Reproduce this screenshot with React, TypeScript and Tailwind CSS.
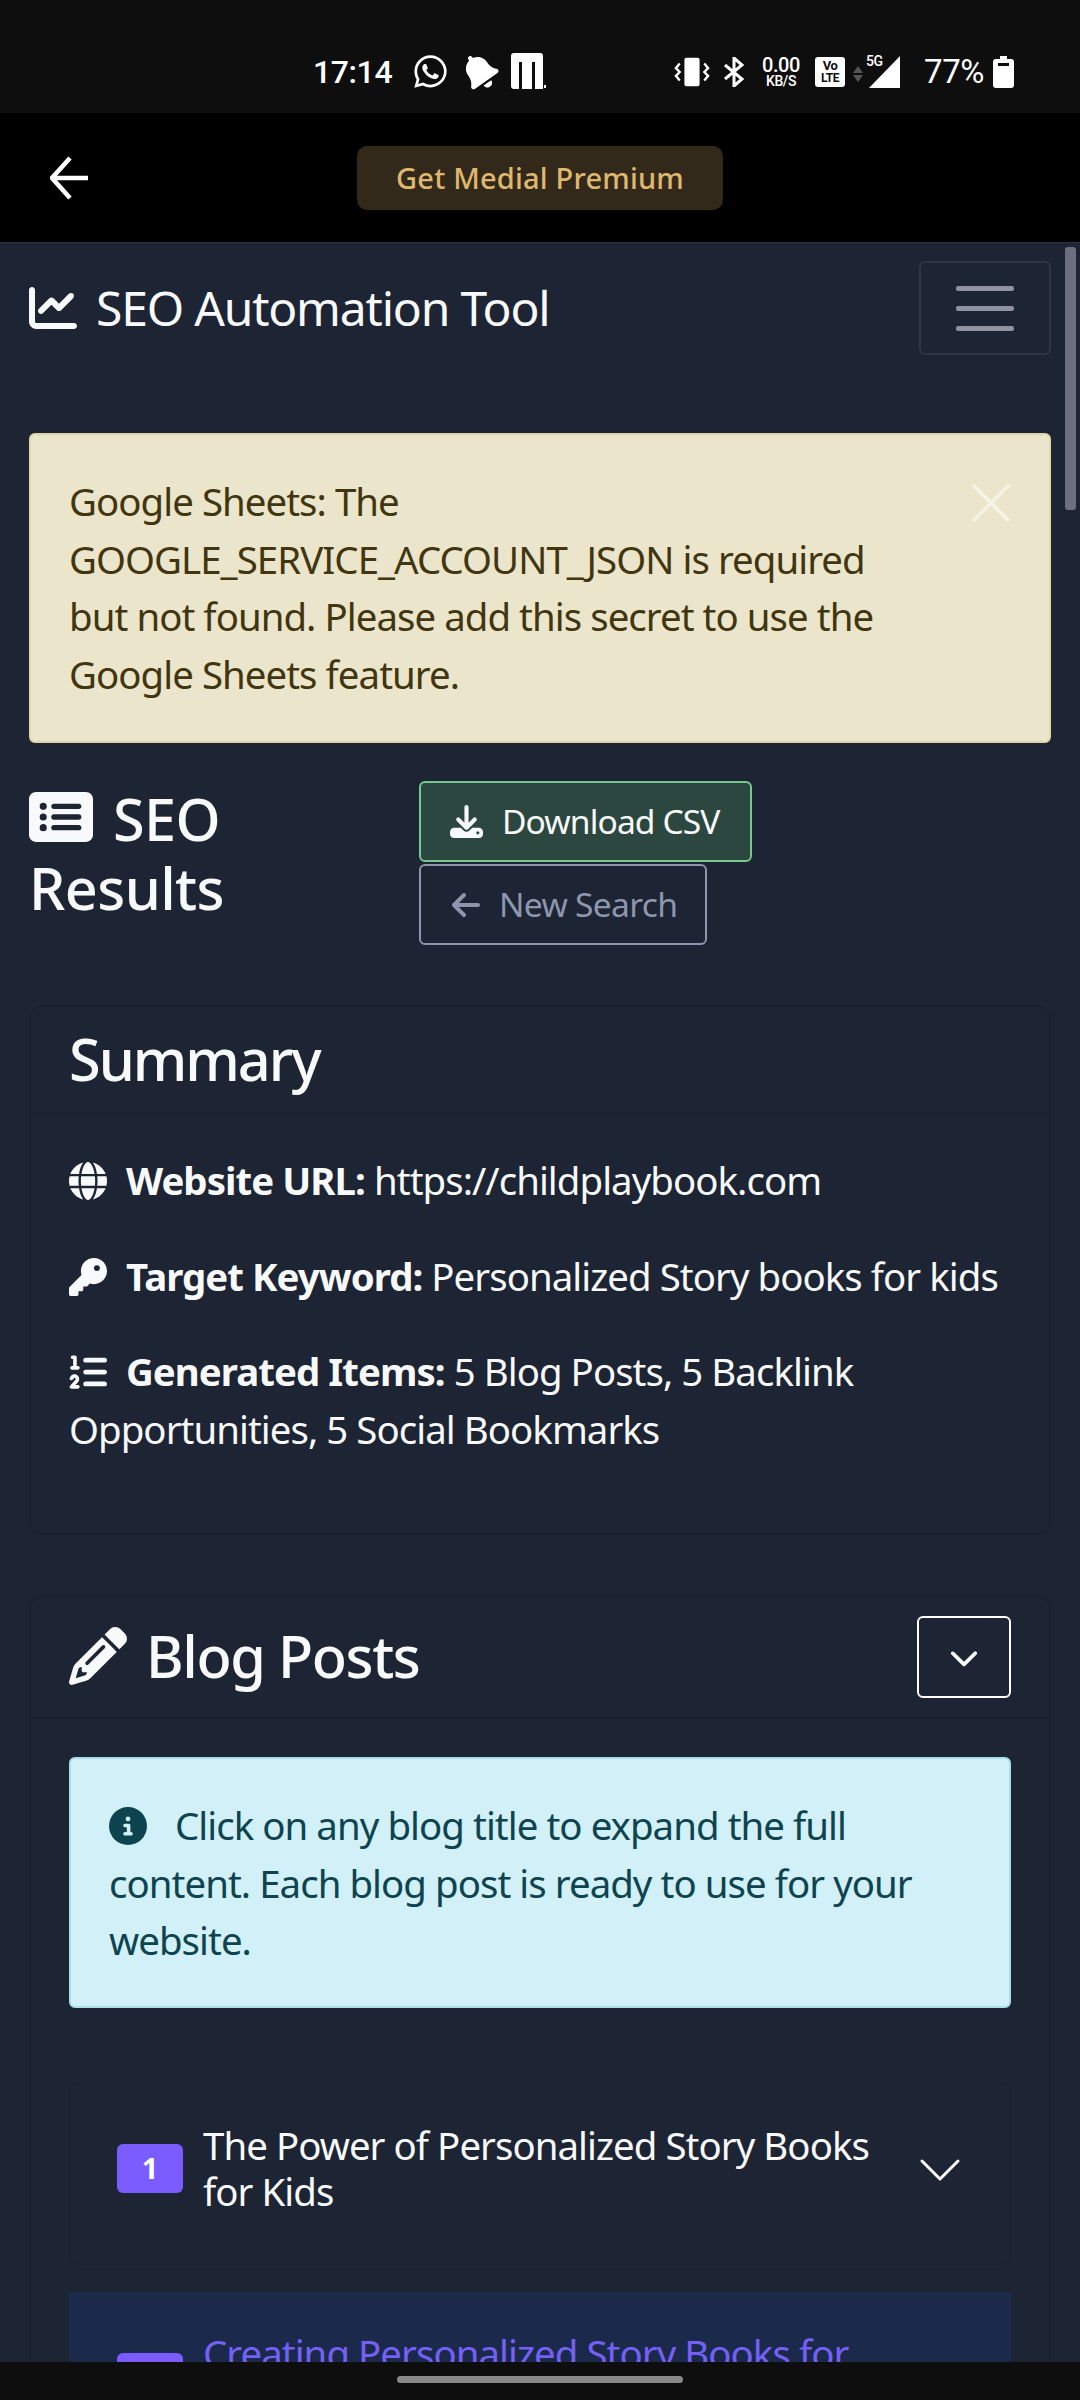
import {
	FaArrowLeft,
	FaBell,
	FaChartLine,
	FaChevronDown,
	FaCircleInfo,
	FaDownload,
	FaGlobe,
	FaKey,
	FaListOl,
	FaPencil,
	FaRectangleList,
	FaWhatsapp,
} from "react-icons/fa6";

const StatusBar = () => {
	return (
		<div className="h-[113px] shrink-0 bg-[#0e0e0e] pt-[53px] pl-[313px] flex items-start text-white tracking-[-0.4px] font-['Roboto',sans-serif]">
			<span className="text-[32px] leading-[38px] w-[80px] font-medium">17:14</span>
			<FaWhatsapp className="ml-[19px] size-[37px]" />
			<FaBell className="ml-[12px] size-[37px] -rotate-[35deg]" />
			<svg viewBox="0 0 36 36" className="ml-[12px] size-[36px]" fill="white">
				<path d="M4 0h26a3 3 0 0 1 3 3v33H25V9h-3v27H12V9H9v27H4a3 3 0 0 1-3-3V3a3 3 0 0 1 3-3z" />
				<rect x="34" y="32" width="2" height="3" />
			</svg>

			<svg viewBox="0 0 38 30" className="ml-[128px] mt-[4px] w-[36px] h-[30px]" fill="none" stroke="white" strokeWidth="2.5">
				<rect x="11" y="0" width="16" height="30" rx="2" fill="white" stroke="none" />
				<path d="M6 6 2 11l4 4-4 4 4 5M32 6l4 5-4 4 4 4-4 5" />
			</svg>
			<svg viewBox="0 0 20 30" className="ml-[14px] mt-[4px] w-[20px] h-[30px]" fill="none" stroke="white" strokeWidth="3">
				<path d="M1 8l17 14-8 7V1l8 7L1 22" />
			</svg>
			<div className="ml-[16px] mt-[2px] w-[42px] flex flex-col items-center font-medium">
				<span className="text-[20px] leading-[20px]">0.00</span>
				<span className="text-[14px] leading-[12px]">KB/S</span>
			</div>
			<div className="ml-[13px] mt-[4px] w-[30px] h-[30px] rounded-[3px] bg-white text-[#0e0e0e] flex flex-col items-center justify-center font-bold">
				<span className="text-[13px] leading-[13px]">Vo</span>
				<span className="text-[12px] leading-[13px]">LTE</span>
			</div>
			<div className="ml-[8px] mt-[13px] flex flex-col gap-[2px]">
				<div className="w-0 h-0 border-x-[5px] border-x-transparent border-b-[7px] border-b-[#555555]" />
				<div className="w-0 h-0 border-x-[5px] border-x-transparent border-t-[7px] border-t-[#555555]" />
			</div>
			<div className="relative ml-[5px] mt-[3px] w-[32px] h-[32px]">
				<svg viewBox="0 0 32 32" className="size-[32px]" fill="white">
					<path d="M32 0v32H1z" />
				</svg>
				<span className="absolute -left-[2px] -top-[2px] text-[14px] leading-[14px] font-medium">5G</span>
			</div>
			<span className="ml-[24px] text-[33px] leading-[38px] w-[59px]">77%</span>
			<svg viewBox="0 0 21 32" className="ml-[10px] mt-[3px] w-[21px] h-[32px]" fill="white">
				<path d="M7 0h7v3h4a3 3 0 0 1 3 3v23a3 3 0 0 1-3 3H3a3 3 0 0 1-3-3V6a3 3 0 0 1 3-3h4z" />
				<rect x="5" y="7" width="11" height="3" fill="#0e0e0e" />
			</svg>
		</div>
	);
};

const BrowserBar = () => {
	return (
		<div className="h-[130px] shrink-0 bg-black border-b border-[#2c3344] flex items-center relative">
			<svg viewBox="0 0 38 44" className="ml-[50px] w-[38px] h-[44px]" fill="none" stroke="white" strokeWidth="4.5">
				<path d="M20 2 2 22l18 20M2 22h36" />
			</svg>
			<div className="absolute left-[357px] top-[33px] w-[366px] h-[64px] rounded-[10px] bg-[#33291a] text-[#dfb76f] text-[29px] font-medium tracking-[0.2px] flex items-center justify-center">
				Get Medial Premium
			</div>
		</div>
	);
};

const BlogItem = ({ n, title }: { n: number; title: string }) => {
	return (
		<div className="border border-[#1a212f] rounded-[10px] pb-[10px]">
			<div className="h-[171px] pl-[47px] pr-[46px] flex items-center border-b border-[#1a212f]">
				<span className="w-[66px] h-[49px] rounded-[6px] bg-[#7a5cff] text-white text-[29px] font-bold flex items-center justify-center shrink-0">
					{n}
				</span>
				<span className="ml-[20px] flex-1 text-[38.4px] leading-[46px] tracking-[-0.95px] text-[#f8f9fa]">{title}</span>
				<svg viewBox="0 0 16 16" className="size-[48px] mt-[4px] ml-[19px] shrink-0" fill="white">
					<path d="M1.646 4.646a.5.5 0 0 1 .708 0L8 10.293l5.646-5.647a.5.5 0 0 1 .708.708l-6 6a.5.5 0 0 1-.708 0l-6-6a.5.5 0 0 1 0-.708z" />
				</svg>
			</div>
		</div>
	);
};

const App = () => {
	return (
		<div className="w-[1080px] h-[2400px] flex flex-col overflow-hidden bg-[#1d2433] text-[#f8f9fa] font-['Noto_Sans',sans-serif]">
			<StatusBar />
			<BrowserBar />

			<div className="relative flex-1 overflow-hidden px-[29px]">
				{/* scrollbar thumb */}
				<div className="absolute right-[4px] top-[4px] w-[11px] h-[263px] rounded-[3px] bg-[#6b6f80]" />

				<div className="h-[190px] pt-[18px] pb-[78px] flex items-start justify-between">
					<div className="flex items-center h-[94px]">
						<FaChartLine className="size-[48px]" />
						<span className="ml-[19px] text-[48px] leading-[58px] tracking-[-1.2px]">SEO Automation Tool</span>
					</div>
					<div className="w-[132px] h-[94px] border-2 border-[#2e3545] rounded-[6px] flex flex-col items-center justify-center gap-[15px]">
						<div className="w-[58px] h-[5px] rounded-[2px] bg-[#8f93a0]" />
						<div className="w-[58px] h-[5px] rounded-[2px] bg-[#8f93a0]" />
						<div className="w-[58px] h-[5px] rounded-[2px] bg-[#8f93a0]" />
					</div>
				</div>

				<div className="relative h-[310px] rounded-[6px] border-2 border-[#e0d6a8] bg-[#ebe5cb] p-[38px] pr-[130px] text-[38.4px] leading-[57.5px] tracking-[-0.95px] text-[#41360f]">
					Google Sheets: The GOOGLE_SERVICE_ACCOUNT_JSON is required but not found. Please add this secret to use the Google Sheets feature.
					<svg viewBox="0 0 40 40" className="absolute right-[38px] top-[48px] size-[40px]" stroke="#f7f4e6" strokeWidth="3.5">
						<path d="M2 2l36 36M38 2 2 38" />
					</svg>
				</div>

				<div className="mt-[38px] h-[164px] flex items-start">
					<h2 className="w-[390px] pt-[3px] text-[57.6px] leading-[69px] tracking-[-0.6px] font-medium">
						<FaRectangleList className="inline size-[64px] mr-[20px] align-[-8px]" />
						SEO Results
					</h2>
					<div className="flex flex-col items-start gap-[2px]">
						<div className="w-[333px] h-[81px] rounded-[6px] border-2 border-[#75c98f] bg-[#2c4740] flex items-center pl-[29px] text-[33.6px] tracking-[-0.9px]">
							<FaDownload className="size-[33px] mr-[19px]" />
							Download CSV
						</div>
						<div className="w-[288px] h-[81px] rounded-[6px] border-2 border-[#8d96ad] flex items-center pl-[29px] text-[33.6px] tracking-[-0.7px] text-[#8d96ad]">
							<FaArrowLeft className="size-[32px] mr-[17px]" />
							New Search
						</div>
					</div>
				</div>

				<div className="mt-[60px] h-[530px] rounded-[14px] border-2 border-[#1a212f]">
					<div className="h-[107px] px-[38px] pb-[3px] flex items-center border-b-2 border-[#1a212f]">
						<h4 className="text-[57.6px] leading-[69px] tracking-[-2px] font-medium">Summary</h4>
					</div>
					<div className="p-[38px] text-[38.4px] leading-[57.6px] tracking-[-0.95px]">
						<p className="mb-[38px]">
							<FaGlobe className="inline size-[38px] mr-[19px] align-[-5px]" />
							<strong className="font-bold">Website URL:</strong> https://childplaybook.com
						</p>
						<p className="mb-[38px]">
							<FaKey className="inline size-[38px] mr-[19px] align-[-5px]" />
							<strong className="font-bold">Target Keyword:</strong> Personalized Story books for kids
						</p>
						<p>
							<FaListOl className="inline size-[38px] mr-[19px] align-[-5px]" />
							<strong className="font-bold">Generated Items:</strong> 5 Blog Posts, 5 Backlink Opportunities, 5 Social Bookmarks
						</p>
					</div>
				</div>

				<div className="mt-[60px] rounded-[14px] border-2 border-[#1a212f]">
					<div className="h-[122px] pl-[38px] pr-[38px] flex items-center justify-between border-b-2 border-[#1a212f]">
						<h4 className="flex items-center text-[57.6px] leading-[69px] tracking-[-1.4px] font-medium pb-[3px]">
							<FaPencil className="size-[58px] mr-[19px]" />
							Blog Posts
						</h4>
						<div className="w-[94px] h-[82px] rounded-[6px] border-2 border-white flex items-center justify-center">
							<FaChevronDown className="size-[30px]" />
						</div>
					</div>
					<div className="p-[38px]">
						<div className="h-[251px] rounded-[6px] border-2 border-[#a8dfe9] bg-[#d2f0f7] p-[38px] text-[38.4px] leading-[57.6px] tracking-[-0.95px] text-[#0d4450]">
							<FaCircleInfo className="inline size-[38px] mr-[28px] align-[-5px]" />
							Click on any blog title to expand the full content. Each blog post is ready to use for your website.
						</div>
						<div className="mt-[74px]">
							<BlogItem n={1} title="The Power of Personalized Story Books for Kids" />
							<div className="mt-[27px] bg-[#1b2a4a] h-[200px] pl-[48px] pr-[120px] pt-[38px] flex items-start">
								<span className="w-[66px] h-[49px] rounded-[6px] bg-[#7a5cff] text-white text-[29px] font-bold flex items-center justify-center shrink-0 mt-[23px]">
									2
								</span>
								<span className="ml-[20px] flex-1 text-[38.4px] leading-[46px] tracking-[-0.95px] text-[#7560f5]">
									Creating Personalized Story Books for Kids
								</span>
							</div>
						</div>
					</div>
				</div>
			</div>

			<div className="relative h-[38px] shrink-0 bg-[#0e0e0e] flex justify-center pt-[14px]">
				<div className="w-[286px] h-[7px] rounded-full bg-[#888888]" />
			</div>
		</div>
	);
};

export default App;
